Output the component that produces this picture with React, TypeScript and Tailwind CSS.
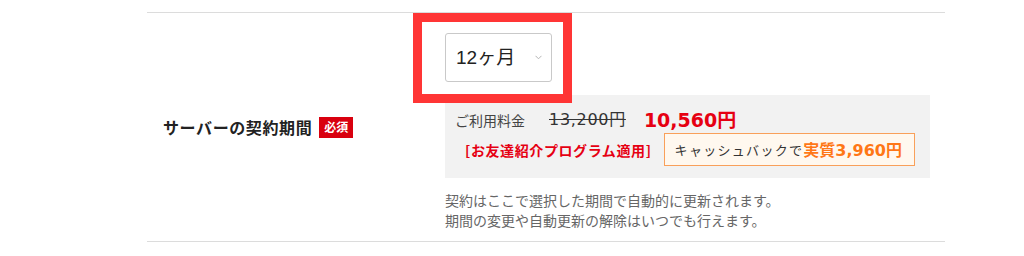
import React from 'react';

const jp = "font-['Noto_Sans_CJK_JP',sans-serif]";
const num = "font-['DejaVu_Sans','Noto_Sans_CJK_JP',sans-serif]";

export default function App() {
  return (
    <div className={`relative h-[256px] w-[1024px] overflow-hidden bg-white text-[#333] ${jp}`}>
      <div className="ml-[147px] mt-3 flex w-[798px] border-y border-[#dcdcdc]">
        {/* label column */}
        <div className="flex w-[298px] items-center pl-4">
          <span className="text-[16px] font-bold leading-none tracking-[0.6px] text-[#222]">サーバーの契約期間</span>
          <span className="ml-[7px] flex h-[21px] w-[34px] items-center justify-center bg-[#d9000f] text-[12px] font-bold leading-none text-white">
            必須
          </span>
        </div>

        {/* field column */}
        <div className="flex-1 pt-5 pb-[11px]">
          <div className="flex h-[49px] w-[107px] items-center justify-between rounded-[3px] border border-[#c9c9c9] bg-white pl-[10px] pr-[9px]">
            <span className="font-['Liberation_Sans','Noto_Sans_CJK_JP',sans-serif] text-[19px] leading-none text-[#222]">12ヶ月</span>
            <svg width="7" height="5" viewBox="0 0 7 5" fill="none" stroke="#b5b5b5" strokeWidth="1">
              <path d="M0.5 0.8 L3.5 3.8 L6.5 0.8" />
            </svg>
          </div>

          <div className="mt-[13px] w-[485px] bg-[#f2f2f2] pl-[10px] pt-[13px] pb-[12px]">
            <div className="flex h-[24px] items-center">
              <span className="text-[14px] leading-none text-[#444]">ご利用料金</span>
              <span className={`ml-[24px] text-[16px] leading-none tracking-[0.7px] text-[#333] line-through decoration-[#333] ${num}`}>13,200円</span>
              <span className={`ml-[18px] text-[19px] font-bold leading-none text-[#e60012] ${num}`}>10,560円</span>
            </div>
            <div className="mt-[1px] flex items-center">
              <span className="pl-[10px] text-[14px] font-bold leading-none tracking-[0.6px] text-[#e60012]">[お友達紹介プログラム適用]</span>
              <div className="ml-[12px] flex h-[33px] w-[251px] items-center border border-[#f9a05a] bg-[#fff8ef] pl-[10px]">
                <span className="text-[13px] leading-none tracking-[1.3px] text-[#333]">キャッシュバックで</span>
                <span className={`text-[16px] font-bold leading-none text-[#ff7716] ${num}`}>
                  <span className={jp}>実質</span>3,960円
                </span>
              </div>
            </div>
          </div>

          <div className="mt-3 text-[14px] leading-[20px] text-[#666]">
            <p>契約はここで選択した期間で自動的に更新されます。</p>
            <p>期間の変更や自動更新の解除はいつでも行えます。</p>
          </div>
        </div>
      </div>

      {/* highlight annotation over the select */}
      <div className="absolute left-[413px] top-[13px] h-[90px] w-[159px] border-[9px] border-[#ff3535]" />
    </div>
  );
}
